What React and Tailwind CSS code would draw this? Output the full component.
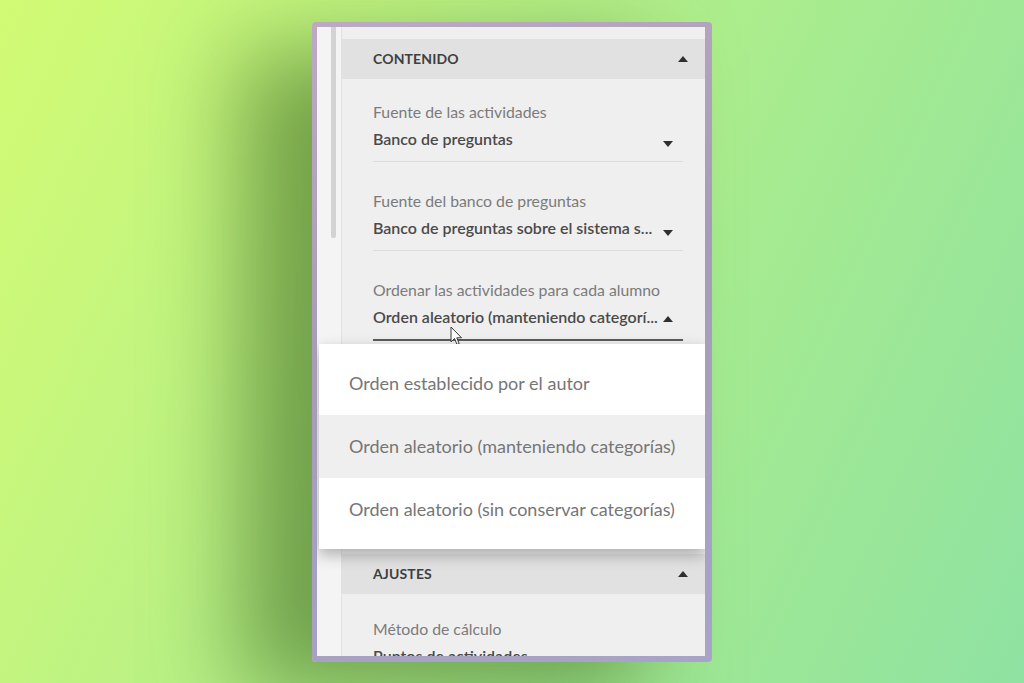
const font = { fontFamily: 'Lato, "Open Sans", sans-serif' };

function TriangleUp({ className = '' }) {
  return (
    <svg width="10" height="6" viewBox="0 0 10 6" className={className}>
      <path d="M0 6 L5 0 L10 6 Z" fill="#2f2f2f" />
    </svg>
  );
}

function TriangleDown({ className = '' }) {
  return (
    <svg width="10" height="6" viewBox="0 0 10 6" className={className}>
      <path d="M0 0 L10 0 L5 6 Z" fill="#2f2f2f" />
    </svg>
  );
}

function SectionHeader({ title }) {
  return (
    <div className="h-[40px] bg-[#e1e1e1] flex items-center justify-between pl-[31px] pr-[17px]">
      <span className="text-[14px] font-bold text-[#3f3f3f] tracking-[0.01em]">{title}</span>
      <TriangleUp />
    </div>
  );
}

function Field({ label, value, open = false, className = '' }) {
  return (
    <div
      className={`ml-[31px] mr-[22px] pb-[12px] ${
        open ? 'border-b-2 border-[#5a5a5a]' : 'border-b border-[#dcdcdc]'
      } ${className}`}
    >
      <div className="h-[20px] leading-[20px] text-[15.8px] text-[#7b7b7b] whitespace-nowrap">{label}</div>
      <div className="mt-[7px] h-[20px] flex items-center">
        <span className="leading-[20px] text-[16px] font-semibold text-[#4a4a4a] whitespace-nowrap">{value}</span>
        {open ? (
          <TriangleUp className="ml-auto mr-[10px] mt-[4px] shrink-0" />
        ) : (
          <TriangleDown className="ml-auto mr-[10px] mt-[10px] shrink-0" />
        )}
      </div>
    </div>
  );
}

function Cursor() {
  return (
    <svg width="13" height="20" viewBox="0 0 13 20" className="absolute left-[133px] top-[299px]">
      <path
        d="M1 1 L1 16 L4.5 12.5 L7 18.5 L9.2 17.5 L6.8 11.8 L11.5 11.8 Z"
        fill="#ffffff"
        stroke="#3a3a3a"
        strokeWidth="1"
        strokeLinejoin="round"
      />
    </svg>
  );
}

const options = [
  'Orden establecido por el autor',
  'Orden aleatorio (manteniendo categorías)',
  'Orden aleatorio (sin conservar categorías)',
];

export default function App() {
  return (
    <div
      className="w-full h-[683px] flex items-center justify-center overflow-hidden bg-[linear-gradient(115deg,#d2fb74_0%,#b9f186_38%,#a3ea92_68%,#8fe2a2_100%)]"
      style={font}
    >
      <div className="w-[400px] h-[640px] rounded-[4px] pl-[5px] pt-[5px] pr-[7px] pb-[6px] bg-[linear-gradient(160deg,#bda9c4_0%,#a79bb8_45%,#a8a4c8_100%)] shadow-[-70px_30px_90px_rgba(55,95,25,0.55)]">
        <div className="relative w-full h-full bg-[#efefef] flex overflow-hidden">
          {/* scroll gutter */}
          <div className="w-[25px] flex shrink-0 bg-[#f4f4f4]">
            <div className="w-[14px]" />
            <div className="w-[5px] h-[211px] bg-[#d3d3d3] rounded-b-[2px]" />
            <div className="w-[5px]" />
            <div className="w-[1px] bg-[#e2e2e2]" />
          </div>

          {/* content */}
          <div className="flex-1 pt-[12px]">
            <SectionHeader title="CONTENIDO" />
            <Field className="mt-[23px]" label="Fuente de las actividades" value="Banco de preguntas" />
            <Field
              className="mt-[29px]"
              label="Fuente del banco de preguntas"
              value="Banco de preguntas sobre el sistema s..."
            />
            <Field
              className="mt-[29px]"
              label="Ordenar las actividades para cada alumno"
              value="Orden aleatorio (manteniendo categorí..."
              open
            />
            <div className="mt-[213px]">
              <SectionHeader title="AJUSTES" />
            </div>
            <Field className="mt-[25px]" label="Método de cálculo" value="Puntos de actividades" />
          </div>

          <Cursor />

          {/* open dropdown menu */}
          <div className="absolute left-[2px] right-0 top-[317px] bg-white py-[8px] shadow-[0_6px_14px_rgba(0,0,0,0.28)]">
            {options.map((opt, i) => (
              <div
                key={opt}
                className={`h-[63px] flex items-center pl-[30px] text-[18px] text-[#767676] ${
                  i === 1 ? 'bg-[#efefef]' : 'bg-white'
                }`}
              >
                {opt}
              </div>
            ))}
          </div>
        </div>
      </div>
    </div>
  );
}
